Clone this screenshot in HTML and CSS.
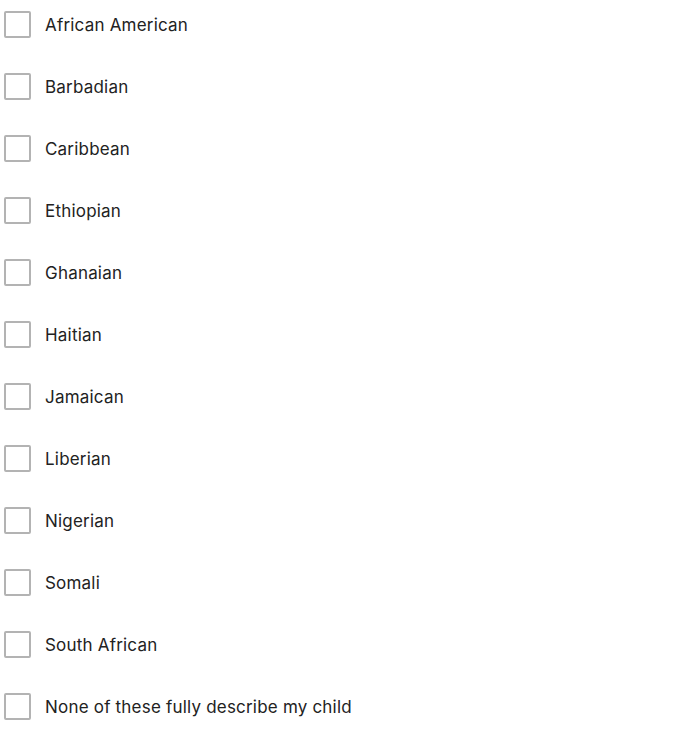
FILE: index.html
```html
<!DOCTYPE html>
<html>
<head>
<meta charset="utf-8">
<link rel="stylesheet" href="styles.css">
</head>
<body>
<ul class="options">
  <li class="option"><span class="box"></span><span class="label">African American</span></li>
  <li class="option"><span class="box"></span><span class="label">Barbadian</span></li>
  <li class="option"><span class="box"></span><span class="label">Caribbean</span></li>
  <li class="option"><span class="box"></span><span class="label">Ethiopian</span></li>
  <li class="option"><span class="box"></span><span class="label">Ghanaian</span></li>
  <li class="option"><span class="box"></span><span class="label">Haitian</span></li>
  <li class="option"><span class="box"></span><span class="label">Jamaican</span></li>
  <li class="option"><span class="box"></span><span class="label">Liberian</span></li>
  <li class="option"><span class="box"></span><span class="label">Nigerian</span></li>
  <li class="option"><span class="box"></span><span class="label">Somali</span></li>
  <li class="option"><span class="box"></span><span class="label">South African</span></li>
  <li class="option"><span class="box"></span><span class="label">None of these fully describe my child</span></li>
</ul>
</body>
</html>
```
FILE: styles.css
```css
html, body {
  margin: 0;
  padding: 0;
  background: #ffffff;
}
.options {
  list-style: none;
  margin: 0;
  padding: 0 0 0 4px;
  display: flex;
  flex-direction: column;
  gap: 13px;
  font-family: Inter, "Noto Sans", sans-serif;
  font-size: 17px;
  color: #222222;
}
.option {
  height: 49px;
  display: flex;
  align-items: center;
  gap: 14px;
}
.box {
  width: 27px;
  height: 27px;
  box-sizing: border-box;
  border: 2px solid #b3b3b3;
  border-radius: 2px;
  flex: none;
}
.label {
  letter-spacing: 0.2px;
}
```
